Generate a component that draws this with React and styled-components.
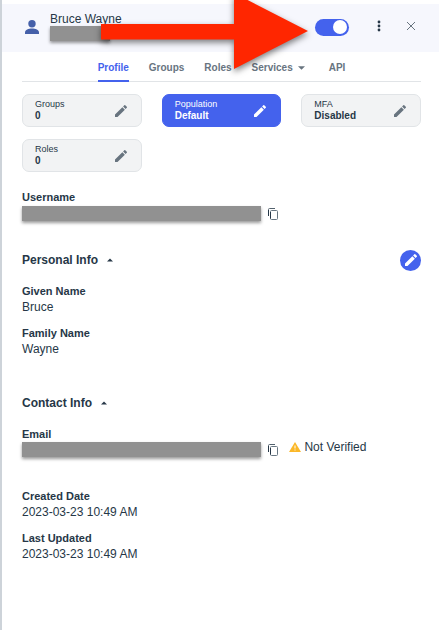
import React from "react";
import styled, { createGlobalStyle } from "styled-components";

const colors = {
  ink: "#263747",
  muted: "#68747f",
  primary: "#4462ed",
  line: "#e1e4e7",
  chip: "#f2f3f4",
};

const GlobalStyle = createGlobalStyle`
  *, *::before, *::after { box-sizing: border-box; }
  body {
    margin: 0;
    background: #ffffff;
    color: ${colors.ink};
    font-family: "Liberation Sans", Arial, sans-serif;
    font-size: 12px;
    line-height: 16px;
  }
  button { font: inherit; color: inherit; }
  svg { display: block; flex: none; }
`;

const Panel = styled.main`
  position: relative;
  min-height: 100vh;
  padding-top: 4px;
  border-left: 2px solid #cdd3d9;
  overflow: hidden;
`;

const Header = styled.header`
  display: flex;
  align-items: center;
  height: 48px;
  padding: 0 18px 0 22px;
  background: #f6f7fd;
`;

const Identity = styled.div`
  flex: 1;
  min-width: 0;
  height: 48px;
  padding-top: 8px;
  margin-left: 10px;
`;

const UserName = styled.h1`
  margin: 0;
  font-size: 12px;
  line-height: 14px;
  font-weight: 400;
`;

const Redaction = styled.div`
  width: ${({ $width }) => $width};
  height: 15px;
  background: #919191;
  box-shadow: 0 2px 3px rgba(0, 0, 0, 0.4);
`;

const Toggle = styled.input`
  appearance: none;
  display: flex;
  align-items: center;
  width: 34px;
  height: 17px;
  margin: 0 0 2px;
  padding: 0 2px;
  border-radius: 9px;
  background: #c5cbd1;
  cursor: pointer;

  &::before {
    content: "";
    width: 14px;
    height: 14px;
    border-radius: 50%;
    background: #ffffff;
  }

  &:checked {
    justify-content: flex-end;
    background: ${colors.primary};
  }
`;

const IconButton = styled.button`
  display: flex;
  align-items: center;
  justify-content: center;
  flex: none;
  width: ${({ $size }) => $size || 20}px;
  height: ${({ $size }) => $size || 20}px;
  padding: 0;
  border: 0;
  border-radius: 50%;
  background: ${({ $filled }) => ($filled ? colors.primary : "transparent")};
  color: ${({ $tone, $filled }) => ($filled ? "#ffffff" : $tone || colors.ink)};
  cursor: pointer;
`;

const HeaderActions = styled.div`
  display: flex;
  align-items: center;
  gap: 12px;
  margin: 0 0 4px 20px;
`;

const Content = styled.div`
  padding: 0 18px 0 20px;
`;

const Tabs = styled.nav`
  display: flex;
  justify-content: center;
  gap: 20px;
  height: 30px;
  border-bottom: 1px solid ${colors.line};
`;

const Tab = styled.a`
  display: flex;
  align-items: center;
  gap: 5px;
  height: 30px;
  padding-top: 4px;
  border-bottom: 2px solid ${({ $active }) => ($active ? colors.primary : "transparent")};
  color: ${({ $active }) => ($active ? colors.primary : colors.muted)};
  font-size: 10px;
  font-weight: 700;
  text-decoration: none;

  &:last-child { margin-left: 4px; }
`;

const Chips = styled.div`
  display: grid;
  grid-template-columns: repeat(3, 1fr);
  gap: 12px 20px;
  padding-top: 12px;
`;

const Chip = styled.button`
  display: flex;
  align-items: center;
  justify-content: space-between;
  height: 33px;
  padding: 0 12px;
  border: 1px solid ${({ $active }) => ($active ? colors.primary : colors.line)};
  border-radius: 7px;
  background: ${({ $active }) => ($active ? colors.primary : colors.chip)};
  color: ${({ $active }) => ($active ? "#ffffff" : colors.ink)};
  text-align: left;
  cursor: pointer;

  svg { color: ${({ $active }) => ($active ? "#ffffff" : colors.muted)}; }
`;

const ChipText = styled.span`
  display: flex;
  flex-direction: column;
  padding-bottom: 2px;
  font-size: 9px;
  line-height: 11px;

  strong { font-size: 10px; }
`;

const Section = styled.section`
  display: flex;
  flex-direction: column;
  gap: 13px;
  padding-top: ${({ $space }) => $space}px;
`;

const SectionHeader = styled.div`
  display: flex;
  align-items: center;
  justify-content: space-between;
  height: 22px;
`;

const SectionTitle = styled.h2`
  margin: 0;
  font-size: 12px;
  line-height: 16px;
`;

const Disclosure = styled.button`
  display: flex;
  align-items: center;
  gap: 9px;
  padding: 0;
  border: 0;
  background: none;
  font-weight: 700;
  cursor: pointer;
`;

const Fields = styled.dl`
  display: flex;
  flex-direction: column;
  gap: 11px;
  margin: 0;
`;

const Field = styled.div`
  display: flex;
  flex-direction: column;
  gap: ${({ $tight }) => ($tight ? 0 : 1)}px;
`;

const Label = styled.dt`
  font-size: 11px;
  line-height: 14px;
  font-weight: 700;
`;

const Value = styled.dd`
  display: flex;
  align-items: center;
  gap: 4px;
  height: 16px;
  margin: 0;
`;

const Status = styled.span`
  display: flex;
  align-items: center;
  gap: 3px;
  height: 16px;
  margin: 0 0 4px 4px;
`;

const Arrow = styled.svg`
  position: absolute;
  top: 0;
  left: 99px;
  overflow: visible;
  pointer-events: none;
  filter: drop-shadow(0 3px 3px rgba(0, 0, 0, 0.5));
`;

const Pencil = () => (
  <svg width="16" height="16" viewBox="0 0 24 24" fill="currentColor" aria-hidden="true">
    <path d="M3 17.25V21h3.75L17.81 9.94l-3.75-3.75L3 17.25zM20.71 7.04a1 1 0 0 0 0-1.41l-2.34-2.34a1 1 0 0 0-1.41 0l-1.83 1.83 3.75 3.75 1.83-1.83z" />
  </svg>
);

const Copy = () => (
  <svg width="12" height="13" viewBox="0 0 12 13" fill="none" aria-hidden="true">
    <path d="M1.5 9V2.5a1 1 0 0 1 1-1H8" stroke="#52616d" />
    <path d="M1.5 9V3" stroke={colors.ink} />
    <rect x="3.5" y="3.5" width="7" height="9" rx="1" stroke="#687783" />
    <path d="M3.5 5v6.5" stroke={colors.ink} />
  </svg>
);

const Caret = ({ up }) => (
  <svg width={up ? 6 : 7} height="4" viewBox="0 0 8 4" fill="currentColor" aria-hidden="true">
    <path d={up ? "M0 4 4 0l4 4z" : "M0 0h8L4 4z"} />
  </svg>
);

const fieldsPersonal = [
  ["Given Name", "Bruce"],
  ["Family Name", "Wayne"],
];

const fieldsDates = [
  ["Created Date", "2023-03-23 10:49 AM"],
  ["Last Updated", "2023-03-23 10:49 AM"],
];

const FieldList = ({ items }) => (
  <Fields>
    {items.map(([label, value]) => (
      <Field key={label}>
        <Label>{label}</Label>
        <Value>{value}</Value>
      </Field>
    ))}
  </Fields>
);

const HiddenField = ({ label, tight, children }) => (
  <Fields>
    <Field $tight={tight}>
      <Label>{label}</Label>
      <Value>
        <Redaction $width="60%" />
        <IconButton $size={16} aria-label={`Copy ${label}`}><Copy /></IconButton>
        {children}
      </Value>
    </Field>
  </Fields>
);

export default function App() {
  return (
    <>
      <GlobalStyle />
      <Panel>
        <Header>
          <svg width="16" height="16" viewBox="0 0 16 16" fill="#4560a9" aria-hidden="true">
            <circle cx="8" cy="3.7" r="3.7" />
            <path d="M1 14v-1.500c0-2.600 3.500-4 7-4s7 1.400 7 4V14z" />
          </svg>
          <Identity>
            <UserName>Bruce Wayne</UserName>
            <Redaction $width="60px" />
          </Identity>
          <Toggle type="checkbox" role="switch" aria-label="User enabled" defaultChecked />
          <HeaderActions>
            <IconButton aria-label="More options">
              <svg width="4" height="12" viewBox="0 0 4 12" fill="currentColor" aria-hidden="true">
                <circle cx="2" cy="2" r="1.4" />
                <circle cx="2" cy="6" r="1.4" />
                <circle cx="2" cy="10" r="1.4" />
              </svg>
            </IconButton>
            <IconButton $tone={colors.muted} aria-label="Close">
              <svg width="10" height="10" viewBox="0 0 10 10" stroke="currentColor" aria-hidden="true">
                <path d="m1 1 8 8M9 1 1 9" />
              </svg>
            </IconButton>
          </HeaderActions>
        </Header>

        <Content>
          <Tabs aria-label="User details">
            <Tab href="#profile" $active aria-current="page">Profile</Tab>
            <Tab href="#groups">Groups</Tab>
            <Tab href="#roles">Roles</Tab>
            <Tab href="#services">Services <Caret /></Tab>
            <Tab href="#api">API</Tab>
          </Tabs>

          <Chips>
            <Chip><ChipText>Groups<strong>0</strong></ChipText><Pencil /></Chip>
            <Chip $active><ChipText>Population<strong>Default</strong></ChipText><Pencil /></Chip>
            <Chip><ChipText>MFA<strong>Disabled</strong></ChipText><Pencil /></Chip>
            <Chip><ChipText>Roles<strong>0</strong></ChipText><Pencil /></Chip>
          </Chips>

          <Section $space={18}>
            <HiddenField label="Username" />
          </Section>

          <Section $space={28}>
            <SectionHeader>
              <SectionTitle>
                <Disclosure aria-expanded="true">Personal Info <Caret up /></Disclosure>
              </SectionTitle>
              <IconButton $size={21} $filled aria-label="Edit personal info"><Pencil /></IconButton>
            </SectionHeader>
            <FieldList items={fieldsPersonal} />
          </Section>

          <Section $space={35}>
            <SectionHeader>
              <SectionTitle>
                <Disclosure aria-expanded="true">Contact Info <Caret up /></Disclosure>
              </SectionTitle>
            </SectionHeader>
            <HiddenField label="Email" tight>
              <Status>
                <svg width="12" height="12" viewBox="0 0 12 12" aria-hidden="true">
                  <path d="M6 1 12 11H0z" fill="#fbb829" />
                  <path d="M6 4.500v3M6 8.500v1" stroke="#ffffff" />
                </svg>
                Not Verified
              </Status>
            </HiddenField>
          </Section>

          <Section $space={32}>
            <FieldList items={fieldsDates} />
          </Section>
        </Content>

        <Arrow width="208" height="70" viewBox="0 0 208 70" fill="#ff2600" aria-hidden="true">
          <path d="M0 24h133V-7l74 38-74 38V39.500H0z" />
        </Arrow>
      </Panel>
    </>
  );
}
